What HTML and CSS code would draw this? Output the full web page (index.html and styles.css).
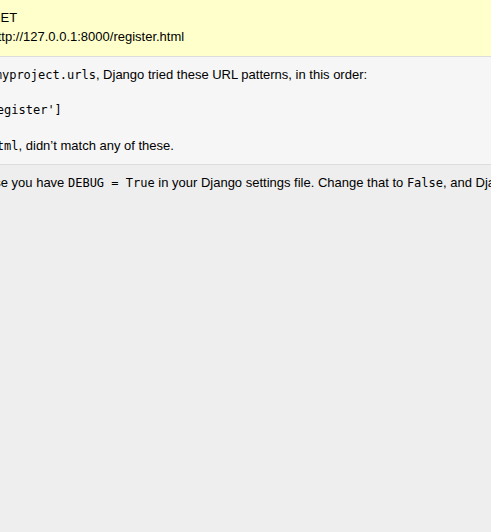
FILE: index.html
```html
<!DOCTYPE html>
<html lang="en">
<head>
<meta charset="utf-8">
<title>Page not found at /register.html</title>
<link rel="stylesheet" href="styles.css">
</head>
<body>
<div class="page">
  <header class="summary">
    <table class="meta">
      <tr><th>Request Method:</th><td>GET</td></tr>
      <tr><th>Request URL:</th><td>http://127.0.0.1:8000/register.html</td></tr>
    </table>
  </header>
  <main class="info">
    <p>Using the URLconf defined in <code>myproject.urls</code>, Django tried these URL patterns, in this order:</p>
    <ol class="patterns">
      <li>register [name='register']</li>
    </ol>
    <p>The current path, <code>register.html</code>, didn’t match any of these.</p>
  </main>
  <footer class="explanation">
    <p>You’re seeing this error because you have <code>DEBUG = True</code> in your Django settings file. Change that to <code>False</code>, and Django will display a standard 404 page.</p>
  </footer>
</div>
</body>
</html>
```

FILE: styles.css
```css
html, body {
  margin: 0;
  padding: 0;
  height: 100%;
}

body {
  overflow: hidden;
  background: #eee;
  color: #000;
  font-family: "Liberation Sans", Arial, sans-serif;
  font-size: 13px;
  line-height: 15px;
}

.page {
  width: 1150px;
  margin-left: -198px;
}

.summary,
.info {
  border-bottom: 1px solid #ddd;
}

.summary {
  background: #ffc;
  padding: 8px 20px 10px;
}

.meta {
  border: none;
  border-collapse: collapse;
  width: 100%;
}

.meta th,
.meta td {
  vertical-align: top;
  padding: 2px 3px;
}

.meta th {
  width: 156px;
  text-align: right;
  color: #666;
  font-weight: bold;
  padding-right: 6.5px;
}

.info {
  background: #f6f6f6;
  padding: 10px 20px;
}

.info p,
.explanation p {
  margin: 0;
}

.patterns {
  margin: 20px 52px;
  padding: 0;
}

.patterns li {
  font-family: "DejaVu Sans Mono", monospace;
  font-size: 12px;
  line-height: 15px;
}

code {
  font-family: "DejaVu Sans Mono", monospace;
  font-size: 12px;
  white-space: pre-wrap;
}

.explanation {
  background: #eee;
  padding: 10px 20px;
}
```
